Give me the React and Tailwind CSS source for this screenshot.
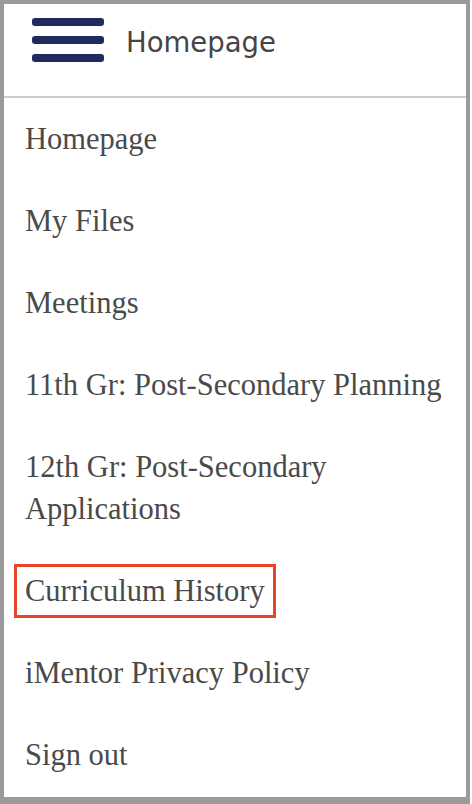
import React from "react";

const items = [
  "Homepage",
  "My Files",
  "Meetings",
  "11th Gr: Post-Secondary Planning",
  "12th Gr: Post-Secondary Applications",
  "Curriculum History",
  "iMentor Privacy Policy",
  "Sign out",
];

export default function App() {
  return (
    <div className="w-[472px] h-[804px] bg-white">
      <div className="w-[470px] h-[804px] border-4 border-b-[7px] border-[#9a9a9a] bg-white flex flex-col">
        {/* header */}
        <div className="h-[94px] flex items-start border-b-2 border-[#cccccc]">
          <button className="mt-[14px] ml-[28px] w-[72px] flex flex-col gap-[10px]">
            <span className="block h-[8px] w-full rounded-[3px] bg-[#1f2a5e]" />
            <span className="block h-[8px] w-full rounded-[3px] bg-[#1f2a5e]" />
            <span className="block h-[8px] w-full rounded-[3px] bg-[#1f2a5e]" />
          </button>
          <span
            className="ml-[22px] mt-[18px] text-[27.5px] leading-[40px] text-[#454545]"
            style={{ fontFamily: '"DejaVu Sans", Verdana, sans-serif' }}
          >
            Homepage
          </span>
        </div>

        {/* menu */}
        <ul
          className="flex flex-col text-[#4a4a4a]"
          style={{ fontFamily: '"Liberation Serif", Georgia, serif' }}
        >
          {items.map((item) => (
            <li key={item} className="pl-[10px] pr-[10px] py-[14px]">
              <a
                href="#"
                className={`block w-fit px-2 py-[3px] border-[3px] text-[30.5px] leading-[42px] ${
                  item === "Curriculum History"
                    ? "border-[#e8432b]"
                    : "border-transparent"
                }`}
              >
                {item}
              </a>
            </li>
          ))}
        </ul>
      </div>
    </div>
  );
}
